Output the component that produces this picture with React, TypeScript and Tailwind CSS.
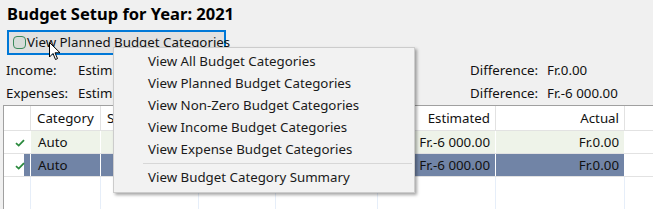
import React from 'react';

const cols = 'grid grid-cols-[27px_70px_98px_77px_102px_118px_129px_1fr]';

const menuItems = [
  'View All Budget Categories',
  'View Planned Budget Categories',
  'View Non-Zero Budget Categories',
  'View Income Budget Categories',
  'View Expense Budget Categories',
];

const Check = () => (
  <svg width="10" height="8" viewBox="0 0 10 8" className="text-[#2b8a3e]">
    <path d="M1 4.2 L3.7 6.6 L9 1.2" fill="none" stroke="currentColor" strokeWidth="1.8" />
  </svg>
);

type RowProps = { selected?: boolean };

const DataRow: React.FC<RowProps> = ({ selected }) => {
  const bg = selected ? 'bg-[#7184a6]' : 'bg-[#eef3e9]';
  return (
    <div className={`${cols} h-[23px] border-b border-[#e2e2e2]`}>
      <div className="flex items-center justify-end relative border-r border-white">
        <span className="absolute left-[11px] top-[8px]"><Check /></span>
        {selected && <div className="w-[6px] h-full bg-[#7184a6]" />}
      </div>
      <div className={`${bg} border-r border-white flex items-center pl-[7px] pt-[2px]`}>Auto</div>
      <div className={`${bg} border-r border-white`} />
      <div className={`${bg} border-r border-white`} />
      <div className={`${bg} border-r border-white`} />
      <div className={`${bg} border-r border-white flex items-center justify-end pr-[5px] pt-[2px]`}>Fr.-6 000.00</div>
      <div className={`${bg} border-r border-white flex items-center justify-end pr-[5px] pt-[2px]`}>Fr.0.00</div>
      <div />
    </div>
  );
};

export default function App() {
  return (
    <div className="relative w-[653px] h-[209px] overflow-hidden bg-[#f0f0f0] text-[13.3px] text-[#111] font-['Noto_Sans',sans-serif]">
      <div className="pl-[7px] pt-[2px] h-[30px] font-bold text-[16.5px] text-black">Budget Setup for Year: 2021</div>

      <div className="pl-[7px]">
        <div className="w-[219px] h-[25px] border-2 border-[#0078d7] bg-[#e1e1e1] flex items-center pl-[4px] gap-[1px] leading-none">
          <span className="shrink-0 w-[13px] h-[13px] rounded-[4px] border-[1.5px] border-[#3b8a5c] bg-[#d6dcd8]" />
          <span className="whitespace-nowrap pt-[1px]">View Planned Budget Categories</span>
        </div>
      </div>

      <div className="mt-[4px] flex h-[23px] items-center">
        <span className="pl-[6px] w-[78px]">Income:</span>
        <span className="w-[392px]">Estimated: Fr.-6 000.00</span>
        <span className="w-[77px]">Difference:</span>
        <span>Fr.0.00</span>
      </div>
      <div className="flex h-[23px] items-center">
        <span className="pl-[6px] w-[78px]">Expenses:</span>
        <span className="w-[392px]">Estimated: Fr.-6 000.00</span>
        <span className="w-[77px]">Difference:</span>
        <span>Fr.-6 000.00</span>
      </div>

      <div className="ml-[3px] border-t border-l border-[#a0a0a0] bg-white">
        <div className={`${cols} h-[25px] border-b border-[#e2e2e2]`}>
          <div className="border-r border-[#e2e2e2]" />
          <div className="border-r border-[#e2e2e2] flex items-center pl-[6px] pt-[2px]">Category</div>
          <div className="border-r border-[#e2e2e2] flex items-center pl-[6px] pt-[2px]">Subcategory</div>
          <div className="border-r border-[#e2e2e2]" />
          <div className="border-r border-[#e2e2e2]" />
          <div className="border-r border-[#e2e2e2] flex items-center justify-end pr-[5px] pt-[2px]">Estimated</div>
          <div className="border-r border-[#e2e2e2] flex items-center justify-end pr-[5px] pt-[2px]">Actual</div>
          <div />
        </div>
        <DataRow />
        <DataRow selected />
        <div className={`${cols} h-[40px]`}>
          <div className="border-r border-[#e6eef9]" />
          <div className="border-r border-[#e6eef9]" />
          <div className="border-r border-[#e6eef9]" />
          <div className="border-r border-[#e6eef9]" />
          <div className="border-r border-[#e6eef9]" />
          <div className="border-r border-[#e6eef9]" />
          <div className="border-r border-[#e6eef9]" />
          <div />
        </div>
      </div>

      {/* dropdown menu */}
      <div className="absolute left-[113px] top-[47px] w-[302px] bg-[#f2f2f2] border border-[#cccccc] shadow-[2px_2px_3px_rgba(0,0,0,0.35)] pt-[3px] pb-[3px] text-[#1a1a1a]">
        {menuItems.map(item => (
          <div key={item} className="h-[22px] flex items-center pl-[34px] whitespace-nowrap">{item}</div>
        ))}
        <div className="ml-[29px] mr-[2px] mt-[2px] mb-[3px] h-px bg-[#d7d7d7]" />
        <div className="h-[22px] flex items-center pl-[34px] whitespace-nowrap">View Budget Category Summary</div>
      </div>

      {/* mouse pointer */}
      <svg className="absolute left-[49px] top-[42px]" width="12" height="19" viewBox="0 0 12 19">
        <path d="M0.5 0.5 L0.5 15 L4 11.5 L6.5 17.5 L8.5 16.6 L6 10.8 L11 10.8 Z" fill="white" stroke="black" strokeWidth="1" />
      </svg>
    </div>
  );
}
